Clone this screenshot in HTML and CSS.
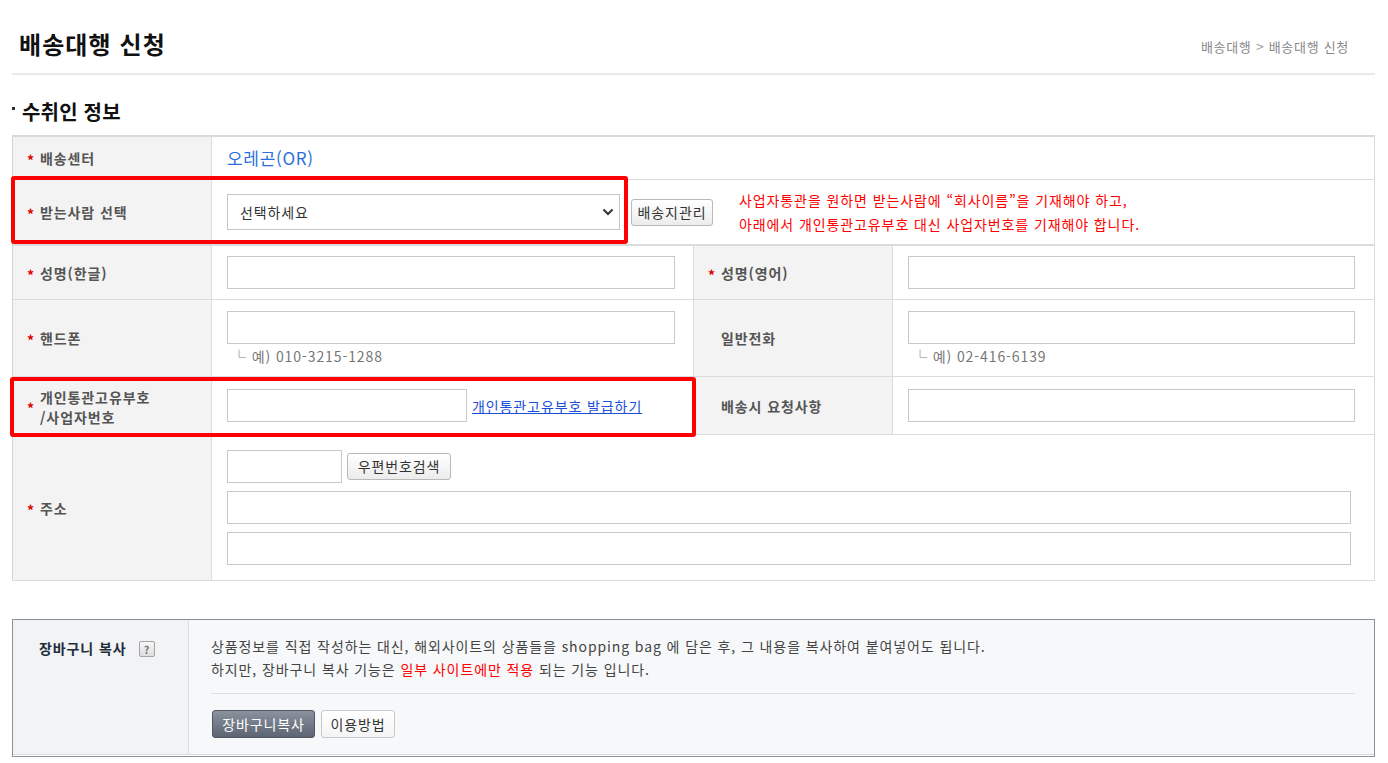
FILE: index.html
```html
<!DOCTYPE html>
<html lang="ko">
<head>
<meta charset="utf-8">
<title>배송대행 신청</title>
<link rel="stylesheet" href="styles.css">
</head>
<body>
<div class="page">
  <header class="page-head">
    <h1 class="page-title">배송대행 신청</h1>
    <div class="crumb">배송대행 <span class="crumb-sep">&gt;</span> 배송대행 신청</div>
  </header>

  <h2 class="section-title"><span class="bullet"></span>수취인 정보</h2>

  <div class="form-wrap">
    <div class="form-grid">
      <div class="lbl"><span class="req">*</span><span>배송센터</span></div>
      <div class="val span3"><span class="center-name">오레곤(OR)</span></div>

      <div class="lbl row-sep"><span class="req">*</span><span>받는사람 선택</span></div>
      <div class="val span3 row-sep val-row">
        <span class="select-wrap">
          <select class="sel"><option>선택하세요</option></select>
          <svg class="chev" width="12" height="8" viewBox="0 0 12 8"><polyline points="1.5,1.5 6,6 10.5,1.5" fill="none" stroke="#333" stroke-width="2"/></svg>
        </span>
        <button class="btn btn-addr" type="button">배송지관리</button>
        <p class="note">사업자통관을 원하면 받는사람에 “회사이름”을 기재해야 하고,<br>아래에서 개인통관고유부호 대신 사업자번호를 기재해야 합니다.</p>
      </div>

      <div class="lbl"><span class="req">*</span><span>성명(한글)</span></div>
      <div class="val"><input class="inp w-name" type="text"></div>
      <div class="lbl"><span class="req">*</span><span>성명(영어)</span></div>
      <div class="val val-r"><input class="inp w-name-r" type="text"></div>

      <div class="lbl"><span class="req">*</span><span>핸드폰</span></div>
      <div class="val val-col"><input class="inp w-name" type="text"><span class="hint">└ 예) 010-3215-1288</span></div>
      <div class="lbl"><span class="req"></span><span>일반전화</span></div>
      <div class="val val-r val-col"><input class="inp w-name-r" type="text"><span class="hint">└ 예) 02-416-6139</span></div>

      <div class="lbl"><span class="req">*</span><span class="lbl-multi"><span class="lbl-line">개인통관고유부호</span><span class="lbl-line">/사업자번호</span></span></div>
      <div class="val val-row"><input class="inp w-pcc" type="text"><a class="issue-link" href="#">개인통관고유부호 발급하기</a></div>
      <div class="lbl"><span class="req"></span><span>배송시 요청사항</span></div>
      <div class="val val-r"><input class="inp w-name-r" type="text"></div>

      <div class="lbl"><span class="req">*</span><span>주소</span></div>
      <div class="val span3 val-col">
        <div class="zip-row"><input class="inp w-zip" type="text"><button class="btn btn-zip" type="button">우편번호검색</button></div>
        <input class="inp w-addr addr-gap" type="text">
        <input class="inp w-addr addr-gap" type="text">
      </div>
    </div>
    <div class="hl hl-1"></div>
    <div class="hl hl-2"></div>
  </div>

  <div class="cart-box">
    <div class="cart-inner">
      <div class="cart-label">장바구니 복사<span class="help">?</span></div>
      <div class="cart-body">
        <p class="cart-text">상품정보를 직접 작성하는 대신, 해외사이트의 상품들을 shopping bag 에 담은 후, 그 내용을 복사하여 붙여넣어도 됩니다.<br>하지만, 장바구니 복사 기능은 <span class="red">일부 사이트에만 적용</span> 되는 기능 입니다.</p>
        <div class="cart-actions">
          <button class="btn btn-dark" type="button">장바구니복사</button>
          <button class="btn btn-light" type="button">이용방법</button>
        </div>
      </div>
    </div>
  </div>
</div>
</body>
</html>
```
FILE: styles.css
```css
* { box-sizing: border-box; }
html, body { margin: 0; padding: 0; background: #fff; }
body {
  font-family: "Noto Sans CJK KR", "Noto Sans", sans-serif;
  font-size: 14px;
  letter-spacing: 0.9px;
  color: #333;
}
.page { padding: 0 13px 0 12px; width: 1388px; }

.page-head {
  display: flex;
  justify-content: space-between;
  align-items: center;
  height: 75px;
  padding: 14px 26px 0 7px;
  border-bottom: 2px solid #e9e9e9;
}
.page-title {
  margin: 0;
  font-size: 24px;
  line-height: 30px;
  font-weight: 700;
  letter-spacing: 1.1px;
  color: #111;
}
.crumb {
  font-size: 13px;
  color: #888;
  line-height: 18px;
  padding-top: 5px;
  letter-spacing: 0.7px;
}
.crumb-sep { color: #999; font-size: 14px; }

.section-title {
  display: flex;
  align-items: flex-start;
  margin: 0;
  padding: 25px 0 11px 0;
  font-size: 20px;
  line-height: 24px;
  font-weight: 700;
  letter-spacing: 0.2px;
  color: #111;
}
.bullet {
  width: 3px;
  height: 3px;
  background: #333;
  margin: 7px 7px 0 0;
}

.form-wrap { position: relative; }
.form-grid {
  display: grid;
  grid-template-columns: 199px 482px 199px 1fr;
  grid-template-rows: 43px 66px 54px 77px 58px 146px;
  border-top: 2px solid #d9d9d9;
  border-left: 1px solid #d3d3d3;
}
.lbl, .val {
  border-right: 1px solid #dcdcdc;
  border-bottom: 1px solid #dcdcdc;
  display: flex;
  align-items: center;
}
.row-sep { border-bottom: 2px solid #dcdcdc; }
.lbl {
  background: #f3f3f3;
  padding-left: 14px;
  font-weight: 700;
  color: #555;
  line-height: 18px;
}
.req {
  display: inline-block;
  width: 13px;
  flex: none;
  color: #d00;
  font-weight: 700;
  font-size: 14px;
  position: relative;
  top: 2px;
}
.lbl-multi { display: flex; flex-direction: column; padding-top: 3px; }
.lbl-line { display: block; line-height: 20px; height: 20px; }
.val { padding-left: 15px; background: #fff; }
.val-r { padding-left: 15px; }
.span3 { grid-column: span 3; }
.val-col { flex-direction: column; justify-content: center; align-items: flex-start; }
.val-row { flex-direction: row; }

.center-name {
  font-size: 17px;
  color: #2a6fdb;
  line-height: 24px;
  letter-spacing: 0.7px;
}

.select-wrap { position: relative; display: inline-block; }
.sel {
  appearance: none;
  -webkit-appearance: none;
  width: 393px;
  height: 36px;
  border: 1px solid #c6c6c6;
  border-radius: 0;
  background: #fff;
  padding: 0 30px 0 12px;
  font-family: inherit;
  font-size: 14px;
  letter-spacing: 0.9px;
  color: #333;
}
.chev { position: absolute; right: 6px; top: 14px; pointer-events: none; }

.btn {
  font-family: inherit;
  font-size: 14px;
  letter-spacing: 0.9px;
  color: #333;
  height: 27px;
  padding: 0;
  border: 1px solid #b9b9b9;
  border-radius: 3px;
  background: linear-gradient(#ffffff, #ececec);
  line-height: 25px;
  cursor: pointer;
}
.btn-addr { width: 82px; margin-left: 11px; }
.btn-zip { width: 104px; margin-left: 5px; }

.note {
  margin: 0 0 0 26px;
  color: #f00;
  font-size: 14px;
  line-height: 24px;
}

.inp {
  height: 33px;
  border: 1px solid #c8c8c8;
  background: #fff;
  padding: 0 8px;
  font-family: inherit;
  font-size: 14px;
  margin: 0;
}
.w-name { width: 448px; }
.w-name-r { width: 447px; }
.w-pcc { width: 240px; }
.w-zip { width: 115px; }
.w-addr { width: 1124px; }
.addr-gap { margin-top: 8px; }
.zip-row { display: flex; align-items: center; }

.hint {
  margin-top: 3px;
  padding-left: 5px;
  color: #777;
  font-size: 14px;
  line-height: 18px;
}

.issue-link {
  margin-left: 5px;
  color: #1a4fd8;
  text-decoration: underline;
  font-size: 14px;
}

.hl {
  position: absolute;
  border: 4px solid #f00;
  border-radius: 3px;
  pointer-events: none;
}
.hl-1 { left: -1px; top: 41px; width: 617px; height: 68px; }
.hl-2 { left: -2px; top: 242px; width: 686px; height: 60px; }

.cart-box {
  margin-top: 38px;
  border: 1px solid #8b9199;
  padding-bottom: 1px;
  background: #fff;
}
.cart-inner {
  display: grid;
  grid-template-columns: 176px 1fr;
  border-bottom: 1px solid #d7d9dc;
}
.cart-label {
  background: #f2f3f5;
  border-right: 1px solid #dcdee1;
  padding: 17px 0 0 26px;
  line-height: 23px;
  font-weight: 700;
  color: #1f2d3d;
  display: flex;
  align-items: flex-start;
}
.help {
  display: inline-block;
  width: 16px;
  height: 16px;
  margin: 4px 0 0 12px;
  border: 1px solid #a3a3a3;
  border-radius: 2px;
  background: linear-gradient(#f7f7f7, #dedede);
  color: #777;
  font-size: 11px;
  line-height: 14px;
  letter-spacing: 0;
  text-align: center;
  font-weight: 700;
}
.cart-body {
  background: #f7f8fa;
  padding: 15px 19px 16px 22px;
}
.cart-text {
  margin: 0;
  line-height: 23px;
  color: #444;
  padding-bottom: 12px;
  border-bottom: 1px solid #dcdde0;
}
.red { color: #f00; }
.cart-actions { display: flex; gap: 6px; margin-top: 16px; }
.btn-dark {
  height: 28px;
  width: 103px;
  color: #fff;
  border-color: #4f5663;
  background: linear-gradient(#8b929e, #5d6472);
  margin-left: 1px;
}
.btn-light {
  height: 28px;
  width: 74px;
  border-color: #c8c8c8;
  background: linear-gradient(#ffffff, #f4f4f4);
}
```
